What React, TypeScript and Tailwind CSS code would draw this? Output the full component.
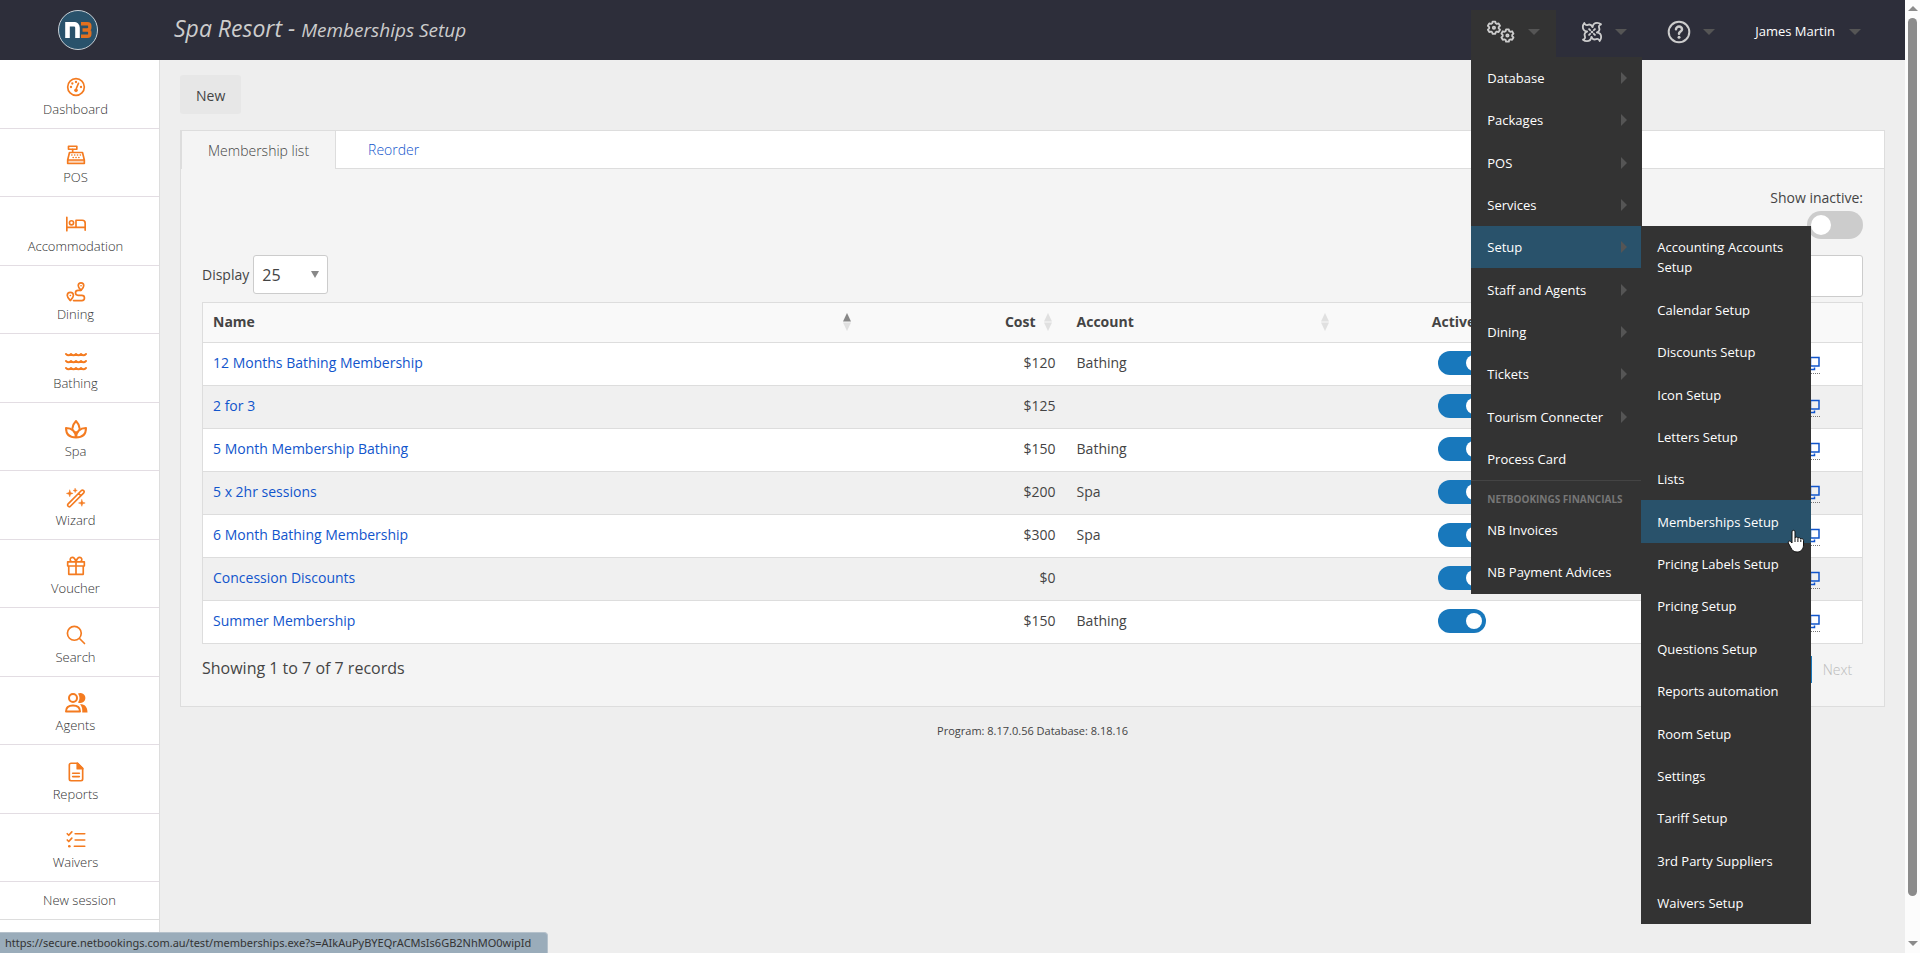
import * as React from "react";
import { clsx } from "clsx";

/* Icons */
type IconProps = { className?: string };

function Stroke({
  children,
  className = "size-5",
  width = 2,
}: {
  children: React.ReactNode;
  className?: string;
  width?: number;
}) {
  return (
    <svg
      aria-hidden
      viewBox="0 0 24 24"
      className={className}
      fill="none"
      stroke="currentColor"
      strokeWidth={width}
      strokeLinecap="round"
      strokeLinejoin="round"
    >
      {children}
    </svg>
  );
}

const DashboardIcon = () => (
  <Stroke>
    <circle cx="12" cy="12" r="10" />
    <path d="M12.5 13.5 15 7.5" />
    <circle cx="12" cy="16" r="2.2" fill="currentColor" stroke="none" />
    {[[12, 6], [7.6, 7.8], [6, 12], [18, 12]].map(([x, y]) => (
      <circle key={`${x}-${y}`} cx={x} cy={y} r="1.4" fill="currentColor" stroke="none" />
    ))}
  </Stroke>
);

const PosIcon = () => (
  <Stroke>
    <path d="M2 18h20v4H2z" fill="currentColor" fillOpacity=".3" stroke="none" />
    <path d="M3 1.5h10v3.6H3zM8 5v4M4.2 9h15.6L22 18v4.2H2V18zM2.2 18h19.6" />
    <path d="M7 12h.1M10.4 12h.1M13.8 12h.1M17.2 12h.1M8.6 15h.1M12 15h.1M15.4 15h.1" />
  </Stroke>
);

const BedIcon = () => (
  <Stroke className="h-5 w-6">
    <path d="M1 4v16M1 16h22M23 19.5V11a3.5 3.5 0 0 0-3.5-3.5H12V16" />
    <circle cx="6.6" cy="10.6" r="2.5" />
  </Stroke>
);

const RouteIcon = () => (
  <Stroke>
    <path d="M18 10c-2-2.4-3.3-3.8-3.3-5.6a3.3 3.3 0 0 1 6.6 0C21.3 6.2 20 7.6 18 10zM5.2 22.3C3 19.6 1.5 18 1.5 16.2a3.7 3.7 0 0 1 7.4 0c0 1.8-1.5 3.4-3.7 6.1z" />
    <path d="M18 10h-3.6a3 3 0 0 0 0 6H19a3.1 3.1 0 0 1 0 6.3H9" />
    <path d="M18 4.5h.1M5.2 16.2h.1" />
  </Stroke>
);

const WavesIcon = () => (
  <Stroke className="size-6">
    {[5, 12, 19].map((y) => (
      <path
        key={y}
        d={`M2 ${y}c1.7 1.6 3.3 1.6 5 0 1.7 1.6 3.3 1.6 5 0 1.7 1.6 3.3 1.6 5 0 1.7 1.6 3.3 1.6 5 0`}
      />
    ))}
  </Stroke>
);

const SpaIcon = () => (
  <Stroke className="size-6">
    <path d="M8.5 11C9 8 10.4 5.6 12 4c1.6 1.6 3 4 3.5 7" />
    <path d="M12 20.5C5.5 20.5 2 17 2 11c5.5 0 9.5 3 10 9.5.5-6.5 4.5-9.5 10-9.5 0 6-3.5 9.5-10 9.5z" />
    <path d="M12 15v5" />
  </Stroke>
);

const WandIcon = () => (
  <Stroke>
    <path d="M2.3 19.4 18.5 3a2 2 0 0 1 2.8 2.8L5 22.2a2 2 0 0 1-2.7-2.8zM15 6.5 17.6 9" />
    <path
      d="m4.5 2.5 1 3 3 1-3 1-1 3-1-3-3-1 3-1zM19 14l1 3 3 1-3 1-1 3-1-3-3-1 3-1zM11 .5l.7 1.8 1.8.7-1.8.7L11 5.5l-.7-1.8L8.5 3l1.8-.7z"
      fill="currentColor"
      strokeWidth="0.6"
    />
  </Stroke>
);

const GiftIcon = () => (
  <Stroke>
    <path d="M2 7h20v5H2zM3.3 12h17.4v10H3.3zM12 7v15M12 7C11 3.5 9.6 1.6 7.6 1.6a2.6 2.6 0 0 0-1.8 4.5M12 7c1-3.5 2.4-5.4 4.4-5.4a2.6 2.6 0 0 1 1.8 4.5" />
  </Stroke>
);

const SearchIcon = () => (
  <Stroke>
    <circle cx="10" cy="10" r="8.3" />
    <path d="m16.2 16.2 6 6" />
  </Stroke>
);

const AgentsIcon = () => (
  <Stroke className="size-6">
    <circle cx="9" cy="7" r="4" />
    <path d="M2 20.5c0-4 2.5-6 7-6s7 2 7 6z" />
    <path
      d="M14 2.6a5 5 0 1 1 0 8.8c2-2.8 2-6 0-8.8zM16 13.3c4.5-.2 7.5 2.4 7.5 8.2h-5.3c.3-3.6-.2-6-2.2-8.2z"
      fill="currentColor"
      stroke="none"
    />
  </Stroke>
);

const ReportIcon = () => (
  <Stroke>
    <path d="M6 1.5h8L20 7.5v13a2 2 0 0 1-2 2H6a2 2 0 0 1-2-2v-17a2 2 0 0 1 2-2zM8 13.5h8M8 17.5h8" />
    <path d="M13.5 1.5v6.5H20z" fill="currentColor" />
  </Stroke>
);

const WaiverIcon = () => (
  <Stroke>
    <path d="M11 4.5h11.5M11 12h11.5M10 19.5h12.5M1.5 4.5 3.3 6.3 7 2.3M1.5 12l1.8 1.8L7 9.8" />
    <circle cx="4" cy="19.5" r="1.6" fill="currentColor" stroke="none" />
  </Stroke>
);

const GEAR =
  "M14.2 2.6l.6 2.7 2 1.1 2.7-.8 2.2 3.8-2 2v2.2l2 2-2.2 3.8-2.7-.8-2 1.1-.6 2.7H9.8l-.6-2.7-2-1.1-2.7.8-2.2-3.8 2-2v-2.2l-2-2 2.2-3.8 2.7.8 2-1.1.6-2.7z";

function CogsIcon() {
  return (
    <svg
      aria-hidden
      viewBox="0 0 28 24"
      className="h-6 w-7"
      fill="none"
      stroke="currentColor"
      strokeLinejoin="round"
    >
      <g transform="translate(-.5 0) scale(.62)" strokeWidth="3">
        <path d={GEAR} />
        <circle cx="12" cy="12.5" r="1.8" />
      </g>
      <g transform="translate(13 7.8) scale(.62)" strokeWidth="3">
        <path d={GEAR} />
        <circle cx="12" cy="12.5" r="1.8" />
      </g>
    </svg>
  );
}

function PinwheelIcon() {
  return (
    <Stroke className="size-[22px]">
      {[0, 90, 180, 270].map((deg) => (
        <path
          key={deg}
          transform={`rotate(${deg} 12 12)`}
          d="M6.5 11.5C4 11 2 9 2 6.5 2 5 2.6 3.4 3.6 2.2 4.2 4 5.500 5 7.500 4.200 9.300 3.500 11.500 4.500 12.500 6.500M8.800 8.800 10 10"
        />
      ))}
      <circle cx="12" cy="12" r="1.4" fill="currentColor" stroke="none" />
    </Stroke>
  );
}

const HelpIcon = () => (
  <Stroke className="size-6">
    <circle cx="12" cy="12" r="10.3" />
    <path d="M9 9.3a3 2.8 0 0 1 6 .2c0 2-3 2.2-3 4.2" strokeWidth="2.5" />
    <circle cx="12" cy="17.2" r="1.5" fill="currentColor" stroke="none" />
  </Stroke>
);

const WindowIcon = () => (
  <svg aria-hidden viewBox="0 0 16 16" className="size-4" fill="none" stroke="currentColor" strokeWidth="1.5">
    <path d="M6.5 2.5h8.500v8.500H6.500zM4.500 6H1v8.500h9.500v-2" />
  </svg>
);

function Caret({ className }: IconProps) {
  return (
    <svg aria-hidden viewBox="0 0 12 6" className={clsx("h-[6px] w-3 fill-[#555]", className)}>
      <path d="M0 0h12L6 6z" />
    </svg>
  );
}

function SortIcon({ active }: { active?: boolean }) {
  return (
    <svg aria-hidden viewBox="0 0 8 18" className="h-[18px] w-2 shrink-0">
      <path d="M4 0l4 8.5H0z" fill={active ? "#888" : "#e0e0e0"} />
      <path d="M4 18l4-8.5H0z" fill="#e0e0e0" />
    </svg>
  );
}

function Logo() {
  return (
    <span
      aria-label="NB"
      className="flex size-10 items-center justify-center rounded-full border border-[#c8d0d6] bg-[#29526b]"
    >
      <svg aria-hidden viewBox="0 0 27 16" className="h-4 w-[27px]" fill="none">
        <path d="M2.5 16V2.2H9a3.5 3.5 0 0 1 3.500 3.500V16" stroke="#fff" strokeWidth="4.6" />
        <path
          d="M16 1.800h6.500a2.300 2.300 0 0 1 2.300 2.300v1.400A2.300 2.300 0 0 1 22.500 8a2.300 2.300 0 0 1 2.300 2.400v1.500a2.300 2.300 0 0 1-2.300 2.300H16M17.500 8h5"
          stroke="#e2701f"
          strokeWidth="3.4"
        />
      </svg>
    </span>
  );
}

/* Data */
const NAV = [
  { label: "Dashboard", icon: DashboardIcon },
  { label: "POS", icon: PosIcon },
  { label: "Accommodation", icon: BedIcon },
  { label: "Dining", icon: RouteIcon },
  { label: "Bathing", icon: WavesIcon },
  { label: "Spa", icon: SpaIcon },
  { label: "Wizard", icon: WandIcon },
  { label: "Voucher", icon: GiftIcon },
  { label: "Search", icon: SearchIcon },
  { label: "Agents", icon: AgentsIcon },
  { label: "Reports", icon: ReportIcon },
  { label: "Waivers", icon: WaiverIcon },
];

const MENU = [
  "Database",
  "Packages",
  "POS",
  "Services",
  "Setup",
  "Staff and Agents",
  "Dining",
  "Tickets",
  "Tourism Connecter",
  "Process Card",
];

const SETUP_MENU = [
  "Accounting Accounts Setup",
  "Calendar Setup",
  "Discounts Setup",
  "Icon Setup",
  "Letters Setup",
  "Lists",
  "Memberships Setup",
  "Pricing Labels Setup",
  "Pricing Setup",
  "Questions Setup",
  "Reports automation",
  "Room Setup",
  "Settings",
  "Tariff Setup",
  "3rd Party Suppliers",
  "Waivers Setup",
];

const MEMBERSHIPS = [
  { name: "12 Months Bathing Membership", cost: "$120", account: "Bathing" },
  { name: "2 for 3", cost: "$125", account: "" },
  { name: "5 Month Membership Bathing", cost: "$150", account: "Bathing" },
  { name: "5 x 2hr sessions", cost: "$200", account: "Spa" },
  { name: "6 Month Bathing Membership", cost: "$300", account: "Spa" },
  { name: "Concession Discounts", cost: "$0", account: "" },
  { name: "Summer Membership", cost: "$150", account: "Bathing" },
];

/* Header menus */
function Pointer() {
  return (
    <svg
      aria-hidden
      viewBox="0 0 18 24"
      className="absolute right-[6px] -bottom-[10px] z-10 h-6 w-[18px]"
      fill="#fff"
      stroke="#111"
      strokeLinejoin="round"
    >
      <path d="M5 14V2.800a1.500 1.500 0 0 1 3 0V9c.400-1.300 2.600-1.200 2.900.300.600-1 2.600-.700 2.900.700.700-.800 2.700-.300 2.700 1.400V16c0 3.800-2.300 7-6.300 7-3.700 0-4.900-1.600-6.300-4.200L1.300 14c-.700-1.500 1-2.600 2.200-1.400z" />
      <path d="M8 9v4M10.900 9.500V13M13.800 10.500V13" fill="none" />
    </svg>
  );
}

function SetupMenu() {
  return (
    <ul className="absolute top-0 left-[170px] flex h-[698px] w-[170px] flex-col bg-[#333]">
      {SETUP_MENU.map((label) => {
        const active = label === "Memberships Setup";
        return (
          <li key={label} className={clsx("relative flex grow", active && "bg-[#29526b]")}>
            <a href="#" className="flex w-full items-center px-4">
              {label}
            </a>
            {active && <Pointer />}
          </li>
        );
      })}
    </ul>
  );
}

function SettingsMenu() {
  return (
    <div className="absolute top-[47px] left-0 w-[171px] bg-[#333] text-[13px] leading-5 text-white">
      <ul className="flex h-[423px] flex-col">
        {MENU.map((label) => {
          const open = label === "Setup";
          return (
            <li key={label} className="relative flex grow">
              <a href="#" className={clsx("flex w-[170px] items-center pr-[14px] pl-4", open && "bg-[#29526b]")}>
                {label}
                {label !== "Process Card" && (
                  <svg aria-hidden viewBox="0 0 6 12" className="ml-auto h-3 w-[6px] fill-[#555]">
                    <path d="M0 0v12l6-6z" />
                  </svg>
                )}
              </a>
              {open && <SetupMenu />}
            </li>
          );
        })}
      </ul>
      <p className="border-t border-[#444] px-4 pt-2 text-[10px] font-bold text-[#777] uppercase">
        Netbookings Financials
      </p>
      <ul className="pb-px">
        {["NB Invoices", "NB Payment Advices"].map((label) => (
          <li key={label}>
            <a href="#" className="block px-4 py-[11px] whitespace-nowrap">
              {label}
            </a>
          </li>
        ))}
      </ul>
    </div>
  );
}

function Header() {
  return (
    <header className="flex h-[60px] bg-[#2d2e3a] text-[#ccc]">
      <a href="#" className="flex w-[156px] shrink-0 items-center justify-center">
        <Logo />
      </a>
      <h1 className="grow pt-3 pl-[18px] text-[23px] leading-8 italic">
        Spa Resort - <span className="text-[19px]">Memberships Setup</span>
      </h1>
      <nav className="flex pt-[10px] pr-[35px]">
        <div className="relative z-20 mr-[25px] h-[47px] w-[85px] bg-[#333]">
          <button type="button" aria-label="Settings" className="flex h-11 w-full items-center pl-4">
            <CogsIcon />
            <Caret className="ml-[13px]" />
          </button>
          <SettingsMenu />
        </div>
        <button type="button" aria-label="Tools" className="mr-10 flex h-11 items-center">
          <PinwheelIcon />
          <Caret className="ml-3" />
        </button>
        <button type="button" aria-label="Help" className="mr-10 flex h-11 items-center">
          <HelpIcon />
          <Caret className="ml-3" />
        </button>
        <button type="button" className="flex h-11 items-center text-[13px] font-medium text-white">
          James Martin
          <Caret className="ml-[14px] mr-[9px]" />
        </button>
      </nav>
    </header>
  );
}

function Sidebar() {
  return (
    <aside className="w-40 shrink-0 border-r border-[#ddd] bg-white text-[13px] font-light text-[#333]">
      <ul className="flex h-[822px] flex-col">
        {NAV.map(({ label, icon: Icon }) => (
          <li key={label} className="flex grow border-b border-[#e3dde3]">
            <a href="#" className="flex w-[151px] flex-col items-center justify-end pb-[9px]">
              <span className="flex h-6 items-center text-[#f47b20]">
                <Icon />
              </span>
              <span className="leading-5">{label}</span>
            </a>
          </li>
        ))}
      </ul>
      <a href="#" className="block border-b border-[#ddd] py-[9px] text-center leading-[19px]">
        New session
      </a>
    </aside>
  );
}

/* Membership list */
function Toggle({ label }: { label: string }) {
  return (
    <input
      type="checkbox"
      role="switch"
      aria-label={label}
      defaultChecked
      className="block h-6 w-12 appearance-none rounded-full bg-[#ccc] p-1 before:block before:size-4 before:rounded-full before:bg-white checked:bg-[#1878bc] checked:before:ml-6"
    />
  );
}

function MembershipTable() {
  return (
    <table className="mt-[5px] w-full table-fixed border-collapse border border-[#ddd] text-[14px]">
      <colgroup>
        <col />
        <col className="w-[201px]" />
        <col className="w-[277px]" />
        <col className="w-[238px]" />
        <col className="w-[282px]" />
      </colgroup>
      <thead>
        <tr className="h-10 border-b border-[#ddd] bg-[#f9f9f9] text-left">
          <th className="pr-[14px] pb-[2px] pl-[10px]">
            <span className="flex items-center justify-between">
              Name <SortIcon active />
            </span>
          </th>
          <th className="pr-[14px] pb-[2px]">
            <span className="flex items-center justify-end gap-2">
              Cost <SortIcon />
            </span>
          </th>
          <th className="pr-[14px] pb-[2px] pl-[11px]">
            <span className="flex items-center justify-between">
              Account <SortIcon />
            </span>
          </th>
          <th className="pb-[2px]">
            <span className="flex items-center justify-center gap-2">
              Active <SortIcon />
            </span>
          </th>
          <th aria-label="Actions" />
        </tr>
      </thead>
      <tbody>
        {MEMBERSHIPS.map((row) => (
          <tr key={row.name} className="h-[43px] border-b border-[#ddd] bg-white even:bg-[#f0f0f0]">
            <td className="pb-1 pl-[10px]">
              <a href="#" className="text-[#1155cc]">
                {row.name}
              </a>
            </td>
            <td className="pr-[10px] pb-1 text-right">{row.cost}</td>
            <td className="pb-1 pl-[11px]">{row.account}</td>
            <td className="pb-[2px]">
              <span className="flex justify-center">
                <Toggle label={`${row.name} active`} />
              </span>
            </td>
            <td className="pr-[42px]">
              <a
                href="#"
                aria-label={`Open ${row.name}`}
                className="ml-auto block w-4 border-b border-dotted border-[#777] pb-[2px] text-[#1155cc]"
              >
                <WindowIcon />
              </a>
            </td>
          </tr>
        ))}
      </tbody>
    </table>
  );
}

function Tabs() {
  return (
    <div role="tablist" className="flex h-[38px] bg-white text-[14px] font-light">
      <button role="tab" aria-selected type="button" className="border-x border-[#ddd] bg-[#f4f4f4] px-[26px]">
        Membership list
      </button>
      <div className="flex grow border-b border-[#ddd]">
        <button role="tab" aria-selected={false} type="button" className="px-8 text-[#1155cc]">
          Reorder
        </button>
      </div>
    </div>
  );
}

function Content() {
  return (
    <main className="min-w-0 grow px-5 pt-[15px]">
      <button type="button" className="h-[39px] rounded-[3px] bg-[#e7e7e7] px-4 pt-[2px] text-[14px]">
        New
      </button>
      <section className="mt-4 border border-[#ddd] bg-[#f4f4f4]">
        <Tabs />
        <div className="px-[21px] pt-[17px] pb-[23px]">
          <div className="flex flex-col items-end gap-px">
            <label htmlFor="inactive" className="text-[14px] leading-6">
              Show inactive:
            </label>
            <input
              id="inactive"
              type="checkbox"
              role="switch"
              className="h-7 w-14 appearance-none rounded-full bg-[#ccc] p-1 before:block before:size-5 before:rounded-full before:bg-white checked:bg-[#1878bc] checked:before:ml-7"
            />
          </div>
          <div className="mt-4 flex items-start justify-between text-[14px]">
            <div className="flex items-center gap-1">
              <label htmlFor="display">Display</label>
              <span className="relative flex items-center">
                <select
                  id="display"
                  defaultValue="25"
                  className="h-[39px] w-[75px] appearance-none rounded-[3px] border border-[#ccc] bg-white pl-2 text-[16px]"
                >
                  <option>10</option>
                  <option>25</option>
                  <option>50</option>
                </select>
                <svg
                  aria-hidden
                  viewBox="0 0 8 7"
                  className="pointer-events-none absolute right-[9px] h-[7px] w-2 fill-[#888]"
                >
                  <path d="M0 0h8L4 7z" />
                </svg>
              </span>
            </div>
            <input
              type="search"
              aria-label="Search memberships"
              className="h-[42px] w-52 rounded-[3px] border border-[#ccc] bg-white px-2"
            />
          </div>
          <MembershipTable />
          <div className="mt-3 flex items-start justify-between">
            <p className="text-[16px] leading-6">Showing 1 to 7 of 7 records</p>
            <div className="flex items-center text-[14px] font-light">
              <button type="button" className="h-[27px] w-8 bg-[#1878bc] text-white">
                1
              </button>
              <button type="button" disabled className="h-[27px] px-[11px] text-[#bbb]">
                Next
              </button>
            </div>
          </div>
        </div>
      </section>
      <p className="mt-4 text-center text-[11px] leading-4">Program: 8.17.0.56 Database: 8.18.16</p>
    </main>
  );
}

function Scrollbar() {
  return (
    <div aria-hidden className="flex w-[15px] shrink-0 flex-col items-center bg-[#fcfcfc] pt-[6px] pb-[7px]">
      <svg viewBox="0 0 10 5" className="h-[5px] w-[10px] fill-[#8b8b8b]">
        <path d="M0 5h10L5 0z" />
      </svg>
      <div className="mt-[7px] mb-[45px] w-[9px] grow rounded-full bg-[#8b8b8b]" />
      <svg viewBox="0 0 10 5" className="h-[5px] w-[10px] fill-[#8b8b8b]">
        <path d="M0 0h10L5 5z" />
      </svg>
    </div>
  );
}

export default function App() {
  return (
    <div className="flex h-screen overflow-hidden font-['Open_Sans',sans-serif] text-[#444]">
      <div className="flex min-w-0 grow flex-col bg-[#eee]">
        <Header />
        <div className="flex min-h-0 grow">
          <Sidebar />
          <Content />
        </div>
      </div>
      <Scrollbar />
      <div className="fixed bottom-0 left-0 rounded-tr-[4px] border-t border-r border-[#b5c1cb] bg-[#9aacba] pr-4 pl-[5px] font-['Noto_Sans',sans-serif] text-[11px] leading-5 text-[#333]">
        https://secure.netbookings.com.au/test/memberships.exe?s=AIkAuPyBYEQrACMsIs6GB2NhMO0wipId
      </div>
    </div>
  );
}
